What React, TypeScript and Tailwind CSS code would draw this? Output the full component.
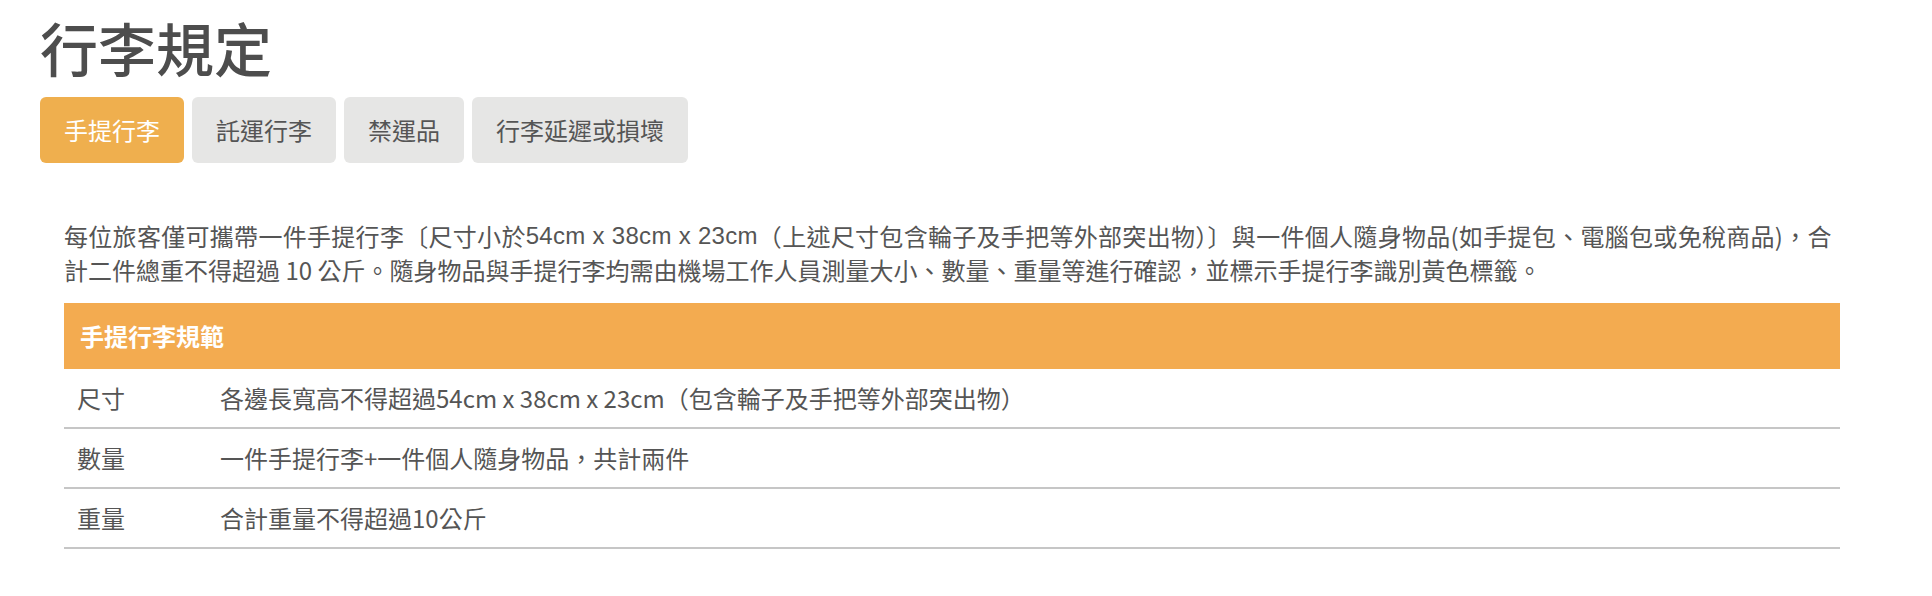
import React from "react";

const tabs = ["手提行李", "託運行李", "禁運品", "行李延遲或損壞"];

const rows: [string, string][] = [
  ["尺寸", "各邊長寬高不得超過54cm x 38cm x 23cm（包含輪子及手把等外部突出物）"],
  ["數量", "一件手提行李+一件個人隨身物品，共計兩件"],
  ["重量", "合計重量不得超過10公斤"],
];

export default function App() {
  return (
    <div
      className="min-h-[596px] w-[1932px] bg-white pt-[11px] text-[#555555]"
      style={{ fontFamily: '"Noto Sans CJK TC", "Noto Sans", sans-serif' }}
    >
      <div className="ml-[40px] w-[1824px]">
        <h1 className="text-[58px] leading-[72px] font-medium text-[#4d4d4d]">行李規定</h1>
        <div className="mt-[14px] flex gap-[8px]">
          {tabs.map((t, i) => (
            <div
              key={t}
              className={
                i === 0
                  ? "flex h-[66px] items-center rounded-[6px] bg-[#efaf4e] px-[24px] text-[24px] leading-[30px] text-white"
                  : "flex h-[66px] items-center rounded-[6px] bg-[#e6e6e5] px-[24px] text-[24px] leading-[30px] text-[#555555]"
              }
            >
              {t}
            </div>
          ))}
        </div>
        <div className="px-[24px] pt-[56px]">
          <div className="text-[24px] text-[#555555]">
            <div className="flex h-[34px] items-center whitespace-nowrap tracking-[0.3px]">
              每位旅客僅可攜帶一件手提行李〔尺寸小於
              <span className="font-[family-name:'Liberation_Sans',sans-serif]">54cm x 38cm x 23cm</span>
              （上述尺寸包含輪子及手把等外部突出物）〕與一件個人隨身物品(如手提包、電腦包或免稅商品)，合
            </div>
            <div className="flex h-[34px] items-center whitespace-nowrap">
              計二件總重不得超過 10 公斤。隨身物品與手提行李均需由機場工作人員測量大小、數量、重量等進行確認，並標示手提行李識別黃色標籤。
            </div>
          </div>
          <div className="mt-[16px]">
            <div className="flex h-[66px] items-center bg-[#f3ab50] pl-[16px] text-[24px] font-bold text-white">
              手提行李規範
            </div>
            {rows.map(([k, v]) => (
              <div key={k} className="flex h-[60px] items-center border-b-2 border-[#c6c6c6] text-[24px] text-[#555555]">
                <div className="w-[143px] shrink-0 pl-[13px]">{k}</div>
                <div className="pl-[13px]">{v}</div>
              </div>
            ))}
          </div>
        </div>
      </div>
    </div>
  );
}
